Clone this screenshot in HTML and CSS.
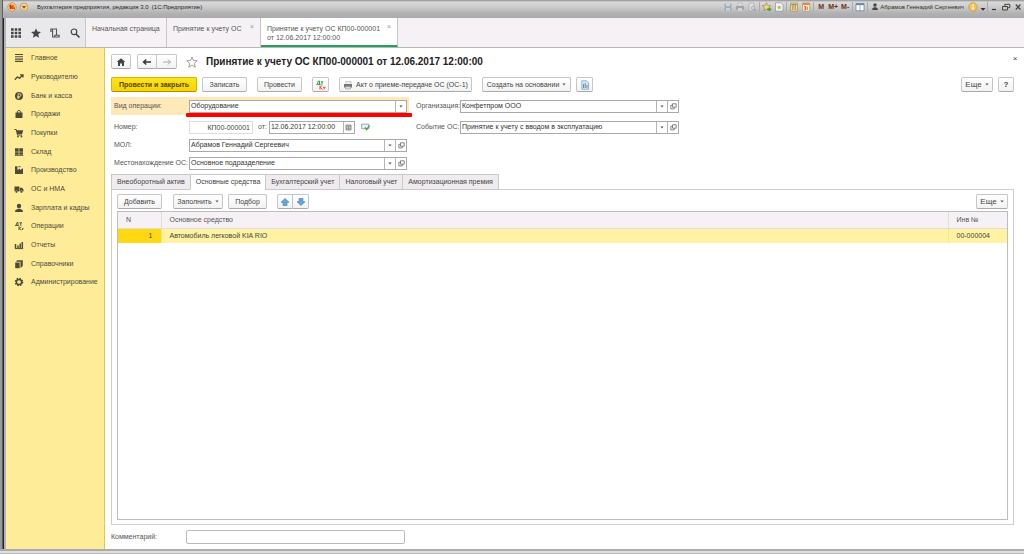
FILE: index.html
```html
<!DOCTYPE html>
<html lang="ru">
<head>
<meta charset="utf-8">
<title>Бухгалтерия предприятия, редакция 3.0</title>
<link rel="stylesheet" href="styles.css">
</head>
<body>
<svg class="defs" aria-hidden="true">
  <symbol id="open" viewBox="0 0 7 7"><path d="M2.5 .8h3.7v3.4H2.5zM2.5 2.4H.8v3.5h3.4V4.2" fill="none" stroke="#777" stroke-width=".9"/></symbol>
  <symbol id="down" viewBox="0 0 5 3"><path d="M.5.3h4L2.500 2.800z" fill="#555"/></symbol>
</svg>
<header class="titlebar">
  <svg class="logo" viewBox="0 0 10 10"><circle cx="5" cy="5" r="4.300" fill="#f7c35a" stroke="#b98a66" stroke-width=".6"/><path d="M2.500 4.500l1-1v3.500M7 4H5v2.200h3" fill="none" stroke="#d2231e" stroke-width="1.200"/></svg>
  <button class="tb round" aria-label="Меню"><svg viewBox="0 0 10 10"><circle cx="5" cy="5" r="4" fill="#f3cf8a" stroke="#a98a60" stroke-width=".6"/><path d="M2.800 4h4.400L5 6.800z" fill="#8a5a20"/></svg></button>
  <span class="app">Бухгалтерия предприятия, редакция 3.0&nbsp; (1С:Предприятие)</span>
  <div class="tools">
    <button class="tb dim" aria-label="Сохранить"><svg viewBox="0 0 10 10"><path d="M1.500 1.500h7v7h-7z" fill="#7d9cbd"/><path d="M3 1.500h4v2.500H3zM3 6h4v2.500H3z" fill="#d5dde5"/></svg></button>
    <button class="tb dim" aria-label="Печать"><svg viewBox="0 0 10 10"><path d="M3 1h4v3H3z" fill="#eee" stroke="#888" stroke-width=".5"/><path d="M1 4h8v3.500H1z" fill="#888"/><path d="M3 6h4v3H3z" fill="#ddd"/></svg></button>
    <button class="tb dim" aria-label="Просмотр"><svg viewBox="0 0 10 10"><path d="M2 1h5v8H2z" fill="#e4e7ea" stroke="#7b8996" stroke-width=".6"/><circle cx="6" cy="6" r="1.700" fill="#c8d5e0" stroke="#7e8b98" stroke-width=".6"/><path d="M7.200 7.200l2 2" stroke="#777"/></svg></button>
    <i class="sep"></i>
    <button class="tb" aria-label="Добавить в избранное"><svg viewBox="0 0 10 10"><path d="M4.500.8l1.200 2.700 3 .3-2.200 2 .6 3-2.600-1.600L1.900 8.800l.6-3-2.200-2 3-.3z" fill="#f0d88a" stroke="#98793a" stroke-width=".6"/><path d="M5 6.500h2V5l2.800 2.500L7 9.500V8H5z" fill="#3ba63b"/></svg></button>
    <button class="tb" aria-label="Избранное"><svg viewBox="0 0 10 10"><path d="M1.500.8H7l2 2v6.400H1.500z" fill="#f2f5f8" stroke="#6f8598" stroke-width=".6"/><path d="M5.200 3l.7 1.500 1.700.2-1.200 1.100.3 1.700-1.500-.9-1.500.9.3-1.700L2.800 4.700l1.700-.2z" fill="#dba63c"/></svg></button>
    <i class="sep"></i>
    <button class="tb" aria-label="Калькулятор"><svg viewBox="0 0 10 10"><path d="M1.500 1h7v8.200h-7z" fill="#e9d89a" stroke="#9c8342" stroke-width=".6"/><path d="M2.500 2h5v1.500h-5z" fill="#6ea35f"/><path d="M3 5h4M3 7h4" stroke="#b35b3b" stroke-dasharray="1 .5"/></svg></button>
    <button class="tb" aria-label="Календарь"><svg viewBox="0 0 10 10"><path d="M1.500 1h7.300v8.200H1.500z" fill="#f8efd0" stroke="#b98445" stroke-width=".6"/><path d="M1.500 1h7.300v2H1.500z" fill="#e38b3c"/><path d="M3 4.500h1.500v1.500H3.400M4.500 6v1.800H3M6.200 8V4.600" fill="none" stroke="#c34a28" stroke-width=".8"/></svg></button>
    <i class="sep"></i>
    <button class="tb mem">M</button><button class="tb mem">M+</button><button class="tb mem">M-</button>
    <i class="sep"></i>
    <button class="tb" aria-label="Панели"><svg viewBox="0 0 10 10"><path d="M1 1.500h8v7.300H1z" fill="#fff" stroke="#52789e" stroke-width=".7"/><path d="M1 1.500h8v1.600H1z" fill="#5a87b3"/><path d="M5 3v6" stroke="#6d8daa" stroke-width=".7"/></svg></button>
    <i class="sep"></i>
    <svg class="person" viewBox="0 0 6 8"><circle cx="3" cy="2" r="1.700" fill="#444"/><path d="M.3 7V5.500L2 4.200h2l1.700 1.300V7z" fill="#444"/></svg>
    <span class="user">Абрамов Геннадий Сергеевич</span>
    <button class="tb info" aria-label="Сведения"><svg viewBox="0 0 10 10"><circle cx="5" cy="5" r="4.200" fill="#f5c451" stroke="#ba8b2e" stroke-width=".6"/><path d="M5 2.200v1.200M5 4.200v3.600" stroke="#fff" stroke-width="1.300"/></svg></button>
    <button class="tb small" aria-label="Ещё"><svg viewBox="0 0 10 10"><path d="M2.500 6h5L5 8.800z" fill="#333"/></svg></button>
    <i class="sep last"></i>
    <button class="tb win" aria-label="Свернуть"><svg viewBox="0 0 10 10"><path d="M3 7.500h4" stroke="#333" stroke-width="1.200"/></svg></button>
    <button class="tb win" aria-label="Восстановить"><svg viewBox="0 0 10 10"><path d="M3.800 4V2.300h5v3.400H7" fill="none" stroke="#444"/><path d="M1.500 4.500h5V8h-5z" fill="none" stroke="#444"/></svg></button>
    <button class="tb win" aria-label="Закрыть"><svg viewBox="0 0 10 10"><path d="M2.800 2.500l4.600 5M7.400 2.500l-4.600 5" stroke="#444" stroke-width="1.300"/></svg></button>
  </div>
</header>
<nav class="tabs">
  <div class="quick">
    <button aria-label="Разделы"><svg viewBox="0 0 12 12"><path d="M1 2.500h10M1 6h10M1 9.500h10" stroke="#444" stroke-width="2.400" stroke-dasharray="2.600 1.100"/></svg></button>
    <button aria-label="Избранное"><svg viewBox="0 0 12 12"><path d="M6 1.200l1.400 3.400 3.600.3-2.800 2.300.9 3.600L6 8.900l-3.100 1.900.9-3.600L1 4.900l3.600-.3z" fill="#444"/></svg></button>
    <button aria-label="История"><svg viewBox="0 0 12 12"><path d="M3.500 4.200H1.800V2h5.700v6.200M3.600 2v8h6.600V8.200H5.800V10" fill="none" stroke="#555" stroke-width="1.100"/></svg></button>
    <button aria-label="Поиск"><svg viewBox="0 0 12 12"><circle cx="5" cy="4.800" r="2.800" fill="none" stroke="#444" stroke-width="1.200"/><path d="M7 7l3.500 3.500" stroke="#444" stroke-width="1.700"/></svg></button>
  </div>
  <a class="tab t1" href="#">Начальная страница</a>
  <a class="tab t2" href="#">Принятие к учету ОС<span class="x">×</span></a>
  <a class="tab t3" href="#">Принятие к учету ОС КП00-000001<br>от 12.06.2017 12:00:00<span class="x">×</span></a>
</nav>
<div class="body">
  <nav class="side">
    <a href="#"><svg viewBox="0 0 10 10"><path d="M1 1.500h8M1 3.800h8M1 6.100h8M1 8.400h8" stroke="#4d4a3c" stroke-width="1.100"/></svg>Главное</a>
    <a href="#"><svg viewBox="0 0 10 10"><path d="M.8 7.800l2.700-3 2 1.600L8.700 3M6 2.800h3v2.700" fill="none" stroke="#4d4a3c" stroke-width="1.300"/></svg>Руководителю</a>
    <a href="#"><svg viewBox="0 0 10 10"><circle cx="5" cy="5" r="4" fill="#4d4a3c"/><path d="M4.200 8V2.700h1.500a1.300 1.300 0 010 2.700H3.200M3.200 6.700h2.500" fill="none" stroke="#ffec99" stroke-width=".8"/></svg>Банк и касса</a>
    <a href="#"><svg viewBox="0 0 10 10"><path d="M1.500 3.500h7V9h-7z" fill="#4d4a3c"/><path d="M3.400 4.500V2.300Q5 .3 6.600 2.300v2.200" fill="none" stroke="#4d4a3c"/></svg>Продажи</a>
    <a href="#"><svg viewBox="0 0 10 10"><path d="M.5 1.500h1.700L3.500 7H8" fill="none" stroke="#4d4a3c"/><path d="M2.500 2.300h6.700L8.200 6H3.300z" fill="#4d4a3c"/><circle cx="4" cy="8.500" r=".9" fill="#4d4a3c"/><circle cx="7.500" cy="8.500" r=".9" fill="#4d4a3c"/></svg>Покупки</a>
    <a href="#"><svg viewBox="0 0 10 10"><path d="M1 1.300h3.700v3.400H1zM5.300 1.300H9v3.400H5.300zM1 5.300h3.700v2.500H1zM5.300 5.300H9v2.500H5.300zM.7 8.300h8.600v.8H.7z" fill="#4d4a3c"/></svg>Склад</a>
    <a href="#"><svg viewBox="0 0 10 10"><path d="M1 9V1.200h2.500V5L6 3.500V5l3-1.700V9z" fill="#4d4a3c"/><path d="M4.500 1.700h2" stroke="#4d4a3c"/></svg>Производство</a>
    <a href="#"><svg viewBox="0 0 10 10"><path d="M.5 2.500h5v5h-5zM6 3.800h2L9.500 5.500v2H6z" fill="#4d4a3c"/><circle cx="2.500" cy="7.800" r="1.200" fill="#4d4a3c" stroke="#ffec99" stroke-width=".4"/><circle cx="7.500" cy="7.800" r="1.200" fill="#4d4a3c" stroke="#ffec99" stroke-width=".4"/></svg>ОС и НМА</a>
    <a href="#"><svg viewBox="0 0 10 10"><circle cx="5" cy="3" r="2.200" fill="#4d4a3c"/><path d="M1.200 9V7.300L4 5.800h2l2.800 1.500V9z" fill="#4d4a3c"/></svg>Зарплата и кадры</a>
    <a href="#"><svg viewBox="0 0 10 10"><path d="M2 4.500L3 1.500h1v3M1.200 5V4.500h3.500V5M5.500 1.800h2.500M6.800 1.800v3M5 5.500V9M7.300 5.800L5.200 7.300 7.500 9M8.500 9V7.500h1" fill="none" stroke="#4d4a3c" stroke-width=".9"/></svg>Операции</a>
    <a href="#"><svg viewBox="0 0 10 10"><path d="M1.500 4v4M4 5.500V8M6.200 3.500V8M8.300 2v6" stroke="#4d4a3c" stroke-width="1.500"/><path d="M.8 8.600h8.400" stroke="#4d4a3c"/></svg>Отчеты</a>
    <a href="#"><svg viewBox="0 0 10 10"><path d="M1.200 3.500h4.500v5.700H1.200z" fill="#4d4a3c"/><path d="M3 1.300h5.800V7L6.500 9V2.800H2z" fill="#4d4a3c"/></svg>Справочники</a>
    <a href="#"><svg viewBox="0 0 10 10"><circle cx="5" cy="5" r="2.600" fill="none" stroke="#4d4a3c" stroke-width="1.500"/><circle cx="5" cy="5" r="3.700" fill="none" stroke="#4d4a3c" stroke-width="1.200" stroke-dasharray="1.600 1.300"/></svg>Администрирование</a>
  </nav>
  <main>
    <div class="head">
      <button class="btn home" aria-label="Домой"><svg viewBox="0 0 10 10"><path d="M5 1.200L9.300 5H8v4H6V6.500H4V9H2V5H.7z" fill="#444"/></svg></button>
      <div class="pair">
        <button class="btn" aria-label="Назад"><svg viewBox="0 0 10 10"><path d="M1.500 5H9M4.300 2.500L1.500 5l2.800 2.500" fill="none" stroke="#333" stroke-width="1.400"/></svg></button><button class="btn" aria-label="Вперёд"><svg viewBox="0 0 10 10"><path d="M1 5h7.500M5.700 2.500L8.500 5 5.700 7.500" fill="none" stroke="#aaa"/></svg></button>
      </div>
      <svg class="star" viewBox="0 0 12 12"><path d="M6 .9l1.400 3.600 3.900.3-3 2.500.9 3.800L6 9l-3.200 2.100.9-3.800-3-2.500 3.900-.3z" fill="#fff" stroke="#888" stroke-width=".8"/></svg>
      <h1>Принятие к учету ОС КП00-000001 от 12.06.2017 12:00:00</h1>
      <button class="close" aria-label="Закрыть форму">×</button>
    </div>
    <div class="cmds">
      <button class="btn primary">Провести и закрыть</button>
      <button class="btn write">Записать</button>
      <button class="btn post">Провести</button>
      <button class="btn sq dtkt" aria-label="Дт/Кт"><svg viewBox="0 0 10 10"><path d="M1.300 4.500L2.300 1h1.200v3.500M.8 5v-.6h3.500V5M4.800 1.800h2.400M6 1.800v3" fill="none" stroke="#3c9a46" stroke-width="1"/><path d="M4 5.500V9.500M6.300 5.500L4.200 7.400l2.300 2.100M7 7.300h2.500M8.200 7.300v2.200" fill="none" stroke="#e04a42" stroke-width="1"/></svg></button>
      <button class="btn act"><svg viewBox="0 0 10 10"><path d="M3 1.500h5v3H3z" fill="#f4f4ea" stroke="#999" stroke-width=".5"/><path d="M1 4h8v3.500H1z" fill="#777"/><path d="M2.500 6.500h5V9h-5z" fill="#ddd" stroke="#888" stroke-width=".5"/></svg>Акт о приеме-передаче ОС (ОС-1)</button>
      <button class="btn based">Создать на основании<svg class="dn"><use href="#down"/></svg></button>
      <button class="btn sq rep" aria-label="Отчёт"><svg viewBox="0 0 10 10"><path d="M1.800.8h4.700l2 2v6.400H1.800z" fill="#dceaf4" stroke="#6c93b4" stroke-width=".7"/><path d="M3.500 4v4M5.200 3v5M6.900 5v3" stroke="#5b8fbb"/></svg></button>
      <button class="btn more">Еще<svg class="dn"><use href="#down"/></svg></button>
      <button class="btn sq help">?</button>
    </div>
    <div class="form">
      <div class="left">
        <div class="row active"><label for="kind">Вид операции:</label><div class="field"><input id="kind" value="Оборудование"><button aria-label="Выбрать"><svg class="dn"><use href="#down"/></svg></button></div><i class="mark"></i></div>
        <div class="row"><label for="num">Номер:</label><input class="num" id="num" value="КП00-000001"><label class="from" for="date">от:</label><div class="field date"><input id="date" value="12.06.2017 12:00:00"><button aria-label="Календарь"><svg viewBox="0 0 7 7"><path d="M1 1h5v5H1z" fill="#ddd" stroke="#666" stroke-width=".7"/><path d="M1 2.300h5M1 4.200h5M3.500 2v4" stroke="#777" stroke-width=".6"/></svg></button></div><svg class="posted" viewBox="0 0 10 8"><path d="M.7.8h8v5h-8z" fill="#e8f1f7" stroke="#6f8da5" stroke-width=".8"/><path d="M4.500 4.500L6.200 7 9.500 2.500" fill="none" stroke="#3fa43c" stroke-width="1.400"/></svg></div>
        <div class="row"><label for="mol">МОЛ:</label><div class="field"><input id="mol" value="Абрамов Геннадий Сергеевич"><button aria-label="Выбрать"><svg class="dn"><use href="#down"/></svg></button><button aria-label="Открыть"><svg><use href="#open"/></svg></button></div></div>
        <div class="row"><label for="place">Местонахождение ОС:</label><div class="field"><input id="place" value="Основное подразделение"><button aria-label="Выбрать"><svg class="dn"><use href="#down"/></svg></button><button aria-label="Открыть"><svg><use href="#open"/></svg></button></div></div>
      </div>
      <div class="right">
        <div class="row first"><label for="org">Организация:</label><div class="field"><input id="org" value="Конфетпром ООО"><button aria-label="Выбрать"><svg class="dn"><use href="#down"/></svg></button><button aria-label="Открыть"><svg><use href="#open"/></svg></button></div></div>
        <div class="row"><label for="event">Событие ОС:</label><div class="field"><input id="event" value="Принятие к учету с вводом в эксплуатацию"><button aria-label="Выбрать"><svg class="dn"><use href="#down"/></svg></button><button aria-label="Открыть"><svg><use href="#open"/></svg></button></div></div>
      </div>
    </div>
    <div class="pages">
      <button>Внеоборотный актив</button><button class="on">Основные средства</button><button>Бухгалтерский учет</button><button>Налоговый учет</button><button>Амортизационная премия</button>
    </div>
    <section class="panel">
      <div class="bar">
        <button class="btn add">Добавить</button>
        <button class="btn fill">Заполнить<svg class="dn"><use href="#down"/></svg></button>
        <button class="btn pick">Подбор</button>
        <div class="pair arrows"><button class="btn" aria-label="Вверх"><svg viewBox="0 0 10 10"><path d="M5 1.500l4 3.800H7v3.200H3V5.300H1z" fill="#5fa9da" stroke="#3d7fae" stroke-width=".6"/></svg></button><button class="btn" aria-label="Вниз"><svg viewBox="0 0 10 10"><path d="M5 8.500L1 4.700h2V1.500h4v3.200h2z" fill="#5fa9da" stroke="#3d7fae" stroke-width=".6"/></svg></button></div>
        <button class="btn more">Еще<svg class="dn"><use href="#down"/></svg></button>
      </div>
      <div class="list">
        <table>
          <colgroup><col class="c1"><col><col class="c3"></colgroup>
          <thead><tr><th>N</th><th>Основное средство</th><th>Инв №</th></tr></thead>
          <tbody><tr><td>1</td><td>Автомобиль легковой KIA RIO</td><td>00-000004</td></tr></tbody>
        </table>
      </div>
    </section>
    <div class="comment"><label for="comment">Комментарий:</label><input id="comment"></div>
  </main>
</div>
</body>
</html>
```
FILE: styles.css
```css
* { box-sizing: border-box; }
body {
  margin: 0;
  min-height: 100vh;
  padding: 0 0 5px 6px;
  display: flex;
  flex-direction: column;
  font: 7px/10px "Liberation Sans", Arial, sans-serif;
  color: #444;
  background:
    linear-gradient(#a9abae 0 2px, #e0e0dd 2px 4px, #b5b5b5 4px) bottom / 100% 5px no-repeat,
    linear-gradient(90deg, #9a9a9a 0 2px, #222 3px 4px, #b5b5b5 4px) left / 6px 100% no-repeat;
}
button, input { font: inherit; color: inherit; margin: 0; padding: 0; }
button { border: 0; background: none; display: flex; align-items: center; justify-content: center; white-space: nowrap; }
a { color: inherit; text-decoration: none; }
svg { display: block; width: 10px; height: 10px; flex: none; }
.defs { position: absolute; width: 0; height: 0; }
.dn { width: 4px; height: 3px; }

.titlebar {
  height: 18px;
  margin-left: -3px;
  padding: 0 0 4px 4px;
  display: flex;
  align-items: center;
  font-size: 6px;
  background: linear-gradient(#8f8f8f 0, #d9d9d9 2px, #c9c9c9 8px, #b2b2b4 13px, #a9abad);
}
.titlebar .round { margin: 0 7px 0 1px; }
.app { color: #222; white-space: nowrap; }
.tools { margin-left: auto; display: flex; align-items: center; }
.tb { width: 12px; height: 12px; }
.tb svg { width: 10px; height: 10px; }
.dim { opacity: .6; }
.sep { width: 1px; height: 10px; margin: 0 1px; background: #aaa; }
.sep.last { margin: 0; }
.mem { color: #6b3322; font-size: 7px; font-weight: bold; }
.person { width: 6px; height: 8px; margin: 0 2px 0 3px; }
.user { color: #33301c; white-space: nowrap; }
.info { margin-left: 3px; }
.small { width: 8px; }

.tabs { display: flex; height: 30px; flex: none; background: #f5f1f5; border-bottom: 1px solid #b9b5b9; }
.quick { width: 80px; display: flex; align-items: center; justify-content: space-between; padding: 0 4px; background: #e9e8eb; border-right: 1px solid #c9c6ca; }
.quick svg { width: 12px; height: 12px; }
.tab { position: relative; padding: 6px 7px 0 6px; line-height: 9px; border-right: 1px solid #c9c6ca; white-space: nowrap; color: #555; }
.t1 { width: 81px; }
.t2 { width: 94px; }
.t3 { width: 137px; background: #fff; border-bottom: 2px solid #21a25b; }
.tab .x { position: absolute; top: 4px; right: 6px; color: #999; }

.body { flex: 1; display: flex; }
.side {
  width: 99px;
  padding-top: 1px;
  display: grid;
  grid-auto-rows: 18px 19px 19px;
  align-content: start;
  background: #ffec99;
  border-right: 1px solid #dcc75c;
}
.side a { display: flex; align-items: center; gap: 7px; padding-left: 8px; white-space: nowrap; color: #4d4a3c; }

main { flex: 1; min-width: 0; padding: 6px 10px 5px 6px; display: flex; flex-direction: column; background: #fff; }
.head { display: flex; align-items: center; height: 15px; }
.btn {
  height: 15px;
  border: 1px solid #c6c6c6;
  border-bottom-color: #aaa;
  border-radius: 2px;
  background: linear-gradient(#fff, #f2f2f2);
  gap: 3px;
}
.home { width: 20px; margin-right: 6px; }
.pair { display: flex; }
.pair .btn { width: 20px; }
.pair .btn:first-child { border-radius: 2px 0 0 2px; }
.pair .btn:last-child { border-left: 0; border-radius: 0 2px 2px 0; }
.star { width: 12px; height: 12px; margin: 0 8px 0 9px; }
h1 { margin: 0; font-size: 10px; line-height: 14px; font-weight: bold; color: #222; white-space: nowrap; }
.close { margin-left: auto; width: 8px; font-size: 8px; align-self: flex-start; margin-right: -5px; }

.cmds { display: flex; margin-top: 8px; gap: 5px; }
.primary { width: 86px; font-weight: bold; color: #4f4712; border-color: #d5b400 #d5b400 #ab9000; background: linear-gradient(#ffe41a, #f7d300); }
.write, .post { width: 45px; }
.post, .dtkt, .act, .based { margin-left: 5px; }
.sq { width: 17px; }
.act { width: 133px; }
.based { width: 89px; }
.more { width: 32px; margin-left: auto; font-size: 8px; }
.help { width: 16px; font-size: 8px; font-weight: bold; }

.form { display: flex; margin-top: 5px; gap: 7px; }
.left { width: 298px; }
.right { width: 263px; }
.row { height: 18px; display: flex; align-items: center; position: relative; }
.row label { width: 75px; flex: none; white-space: nowrap; color: #555; }
.left .row { padding: 0 2px 0 3px; }
.right .row label { width: 44px; }
.active, .first { margin-bottom: 3px; }
.active { background: #ffe9b8; }
.field { flex: 1; display: flex; height: 13px; border: 1px solid #a9a9a9; background: #fff; }
.field input { flex: 1; min-width: 0; border: 0; padding-left: 1px; background: none; color: #333; outline: 0; }
.field button { width: 11px; border-left: 1px solid #b5b5b5; }
.field button svg:not(.dn) { width: 7px; height: 7px; }
.mark { position: absolute; left: 75px; top: 16px; width: 226px; height: 4px; border-radius: 1px; background: #f00; z-index: 1; }
.num { width: 64px; height: 13px; border: 1px solid #ddd; background: #fff; padding-right: 2px; text-align: right; color: #444; }
.row .from { width: auto; margin: 0 2px 0 5px; }
.left .date { flex: none; width: 86px; }
.posted { width: 9px; height: 8px; margin-left: 6px; }

.pages { display: flex; margin-top: 2px; height: 16px; position: relative; margin-bottom: -1px; }
.pages button { height: 16px; padding: 0 5px; border: 1px solid #c9c9c9; border-right: 0; background: #efebef; color: #444; }
.pages button:last-child { border-right: 1px solid #c9c9c9; }
.pages .on { background: #fff; border-bottom-color: #fff; }
.panel { flex: 1; display: flex; flex-direction: column; padding: 4px 5px; border: 1px solid #cfcfcf; }
.bar { display: flex; height: 15px; }
.add { width: 45px; }
.fill { width: 50px; margin-left: 11px; }
.pick { width: 39px; margin-left: 5px; }
.arrows { margin-left: 10px; }
.arrows .btn { width: 16px; }
.list { flex: 1; margin-top: 2px; border: 1px solid #bdbdbd; }
table { width: 100%; border-collapse: collapse; table-layout: fixed; }
.c1 { width: 43px; }
.c3 { width: 59px; }
th { height: 16px; padding: 0 8px; text-align: left; font-weight: normal; color: #555; background: #f5f1f5; border-right: 1px solid #ddd; border-bottom: 1px solid #ddd; }
td { height: 15px; padding: 0 8px; background: #fff2a3; border-right: 1px solid #f5e68f; color: #444; }
td:first-child { text-align: right; background: #ffd814; }
th:last-child, td:last-child { border-right: 0; }

.comment { display: flex; align-items: center; margin-top: 5px; }
.comment label { width: 75px; color: #555; }
.comment input { width: 219px; height: 14px; border: 1px solid #bbb; border-radius: 2px; }
```
